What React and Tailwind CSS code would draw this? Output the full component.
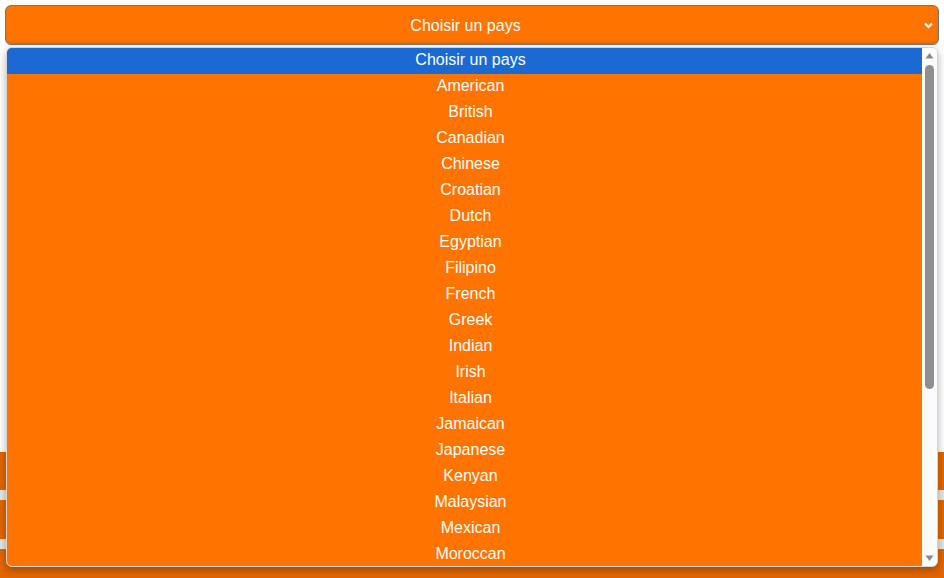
import React from "react";

const options = [
    "American",
    "British",
    "Canadian",
    "Chinese",
    "Croatian",
    "Dutch",
    "Egyptian",
    "Filipino",
    "French",
    "Greek",
    "Indian",
    "Irish",
    "Italian",
    "Jamaican",
    "Japanese",
    "Kenyan",
    "Malaysian",
    "Mexican",
    "Moroccan",
];

const App = () => {
    return (
        <div
            className="relative h-[578px] w-[944px] overflow-hidden bg-white text-white"
            style={{ fontFamily: '"Liberation Sans", Arial, sans-serif' }}
        >
            {/* Closed select */}
            <div className="px-[5px] pt-[5px]">
                <div className="relative flex h-[40px] items-center justify-center rounded-[6px] border border-[#767676] bg-[#ff7300] pr-[13px] pt-[2px] text-[16px] shadow-[inset_0_-2px_2px_rgba(0,0,0,0.08)]">
                    Choisir un pays
                    <svg
                        className="absolute right-[4px] top-[14px] h-[11px] w-[11px]"
                        viewBox="0 0 11 11"
                        fill="none"
                        stroke="white"
                        strokeWidth="2.2"
                    >
                        <path d="M2 3.5 L5.5 7 L9 3.5" />
                    </svg>
                </div>
            </div>

            {/* Buttons below, mostly covered */}
            <div className="mt-[407px] flex flex-col gap-[10px] bg-[#e6e6e6]">
                <div className="h-[38px] bg-[#e26600]" />
                <div className="h-[39px] bg-[#e26600]" />
                <div className="h-[40px] bg-[#e26600]" />
            </div>

            {/* Open dropdown list */}
            <div className="absolute left-[6px] top-[47px] flex h-[520px] w-[932px] overflow-hidden rounded-[6px] border border-[#d4d4d4] bg-white shadow-[0_3px_8px_rgba(0,0,0,0.3)]">
                <div className="flex-1 bg-[#ff7300] text-[16px]">
                    <div className="flex h-[26px] items-center justify-center bg-[#1b69d3] pb-[2px] pl-[12px]">
                        Choisir un pays
                    </div>
                    {options.map((o) => (
                        <div
                            key={o}
                            className="flex h-[26px] items-center justify-center pb-[2px] pl-[12px]"
                        >
                            {o}
                        </div>
                    ))}
                </div>
                <div className="relative w-[15px] bg-[#fbfbfb]">
                    <svg
                        className="absolute left-[3px] top-[3px] h-[9px] w-[9px]"
                        viewBox="0 0 9 9"
                    >
                        <path d="M0.5 7.5 L4.5 2 L8.5 7.5 Z" fill="#8a8a8a" />
                    </svg>
                    <div className="absolute left-[3px] top-[17px] h-[324px] w-[9px] rounded-full bg-[#8f8f8f]" />
                    <svg
                        className="absolute bottom-[3px] left-[3px] h-[9px] w-[9px]"
                        viewBox="0 0 9 9"
                    >
                        <path d="M0.5 1.5 L4.5 7 L8.5 1.5 Z" fill="#8a8a8a" />
                    </svg>
                </div>
            </div>
        </div>
    );
};

export default App;
